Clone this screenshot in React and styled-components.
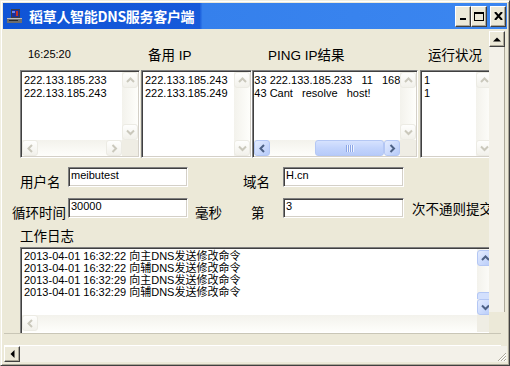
import React from "react"
import styled, { createGlobalStyle } from "styled-components"

const GlobalStyle = createGlobalStyle`
  html, body {
    margin: 0;
    padding: 0;
    background: #ECE9D8;
  }
  body {
    font-family: "Liberation Sans", Arial, sans-serif;
  }
`

const CJK = `"Liberation Sans", "Noto Sans CJK SC", sans-serif`
const COLS = "121px 111px 168px 74px"

// ---------- window frame ----------

const Window = styled.div`
  width: 510px;
  height: 366px;
  box-sizing: border-box;
  display: flex;
  flex-direction: column;
  background: #ECE9D8;
  border-top: 1px solid #F1EFE2;
  border-left: 1px solid #F1EFE2;
  border-right: 1px solid #404040;
  border-bottom: 1px solid #404040;
  box-shadow: inset 1px 1px #fff, inset -1px -1px #ACA899;
  padding: 2px 2px 2px 2px;
  overflow: hidden;
`

const TitleBar = styled.div`
  height: 26px;
  flex: none;
  display: flex;
  align-items: center;
  padding: 0 1px 0 3px;
  background: linear-gradient(90deg, #0F54D6 0%, #1659DA 39%, #3580EC 39.6%, #3B86F0 100%);
`

const Title = styled.div`
  margin-left: 6px;
  color: #fff;
  font-family: "Noto Sans CJK SC", sans-serif;
  font-weight: 700;
  font-size: 14px;
  letter-spacing: -0.3px;
  flex: 1;
`

const Controls = styled.div`
  display: flex;
  align-items: center;
`

const CaptionButton = styled.div`
  width: 16px;
  height: 21px;
  box-sizing: border-box;
  margin-left: ${(p) => p.$gap || 0}px;
  background: #ECE9D8;
  border-top: 1px solid #fff;
  border-left: 1px solid #fff;
  border-right: 1px solid #404040;
  border-bottom: 1px solid #404040;
  box-shadow: inset -1px -1px #ACA899;
  display: flex;
  align-items: center;
  justify-content: center;
`

const AppIcon = () => (
  <svg width="17" height="16" viewBox="0 0 17 16">
    <rect x="1" y="10" width="15" height="5" fill="#6E6E6E" />
    <rect x="1" y="10" width="15" height="1" fill="#BDBDBD" />
    <rect x="3" y="12" width="9" height="1" fill="#2A2A2A" />
    <rect x="5" y="1" width="9" height="9" fill="#3C3C44" />
    <rect x="6" y="2" width="7" height="7" fill="#1B2E9A" />
    <rect x="10" y="3" width="2" height="5" fill="#C03028" />
    <rect x="6" y="3" width="3" height="2" fill="#6F86E8" />
  </svg>
)

// ---------- client area ----------

const Client = styled.div`
  flex: 1;
  display: flex;
  flex-direction: column;
  margin: 0 0 0 1px;
  min-height: 0;
`

const Body = styled.div`
  height: 304px;
  flex: none;
  display: flex;
`

const FormView = styled.div`
  width: 485px;
  flex: none;
  overflow: hidden;
  display: flex;
  flex-direction: column;
`

const ClassicScroll = styled.div`
  width: 16px;
  height: 281px;
  margin-top: 2px;
  box-sizing: border-box;
  display: flex;
  flex-direction: column;
  background: #F3F1E9;
  border-right: 1px solid #ACA899;
`

const ClassicArrow = styled.div`
  width: 16px;
  height: 16px;
  flex: none;
  box-sizing: border-box;
  background: #ECE9D8;
  border-top: 1px solid #fff;
  border-left: 1px solid #fff;
  border-right: 1px solid #404040;
  border-bottom: 1px solid #404040;
  box-shadow: inset -1px -1px #ACA899;
  display: flex;
  align-items: center;
  justify-content: center;
`

const Strip = styled.div`
  height: 11px;
  flex: none;
  border-top: 1px solid #C9C6B6;
  border-bottom: 1px solid #fff;
  margin-right: 6px;
`

const HScroll = styled.div`
  height: 16px;
  flex: none;
  display: flex;
  background: #F3F1E9;
`

const Grip = styled.div`
  margin-left: auto;
  width: 14px;
  height: 16px;
  display: flex;
  align-items: flex-end;
  justify-content: flex-end;
`

// ---------- top section ----------

const HeadRow = styled.div`
  display: grid;
  grid-template-columns: ${COLS};
  height: 16px;
  margin: 15px 0 0 16px;
  align-items: center;
`

const HeadLabel = styled.div`
  padding-left: ${(p) => p.$indent}px;
  font-family: ${CJK};
  font-size: ${(p) => (p.$small ? 11 : 13.5)}px;
  color: #000;
  white-space: nowrap;
`

const BoxRow = styled.div`
  display: grid;
  grid-template-columns: ${COLS};
  margin: 10px 0 0 16px;
  height: 88px;
`

const Sunken = styled.div`
  width: ${(p) => p.$w}px;
  height: ${(p) => p.$h}px;
  box-sizing: border-box;
  background: #fff;
  border-top: 1px solid #808080;
  border-left: 1px solid #808080;
  border-right: 1px solid #fff;
  border-bottom: 1px solid #fff;
  box-shadow: inset 1px 1px #404040, inset -1px -1px #D4D0C8;
  padding: 1px;
  display: grid;
  grid-template-columns: 1fr 16px;
  grid-template-rows: ${(p) => (p.$hbar ? "1fr 16px" : "1fr")};
  overflow: hidden;
`

const Lines = styled.div`
  overflow: hidden;
  padding: ${(p) => p.$top || 2}px 0 0 ${(p) => p.$left || 2}px;
  font-size: 11px;
  line-height: ${(p) => p.$lh || 13}px;
  color: #000;
  white-space: pre;
  font-family: ${CJK};
`

const Line = styled.div`
  margin-left: ${(p) => p.$shift || 0}px;
`

const XpVTrack = styled.div`
  display: flex;
  flex-direction: column;
  justify-content: space-between;
  background: linear-gradient(90deg, #F3F2EC 0%, #FEFEFB 100%);
`

const XpHTrack = styled.div`
  display: flex;
  align-items: stretch;
  background: linear-gradient(180deg, #F3F2EC 0%, #FEFEFB 100%);
`

const Corner = styled.div`
  background: #EFEDE4;
`

const XpButton = styled.div`
  width: 16px;
  height: 16px;
  flex: none;
  box-sizing: border-box;
  border-radius: 3px;
  display: flex;
  align-items: center;
  justify-content: center;
  margin-left: ${(p) => (p.$end ? "auto" : "0")};
  border: 1px solid ${(p) => (p.$active ? "#B4C7F4" : "#ECEBE4")};
  background: ${(p) =>
    p.$active
      ? "linear-gradient(135deg, #E4ECFE 0%, #CBDAFC 55%, #B6CAF8 100%)"
      : "linear-gradient(180deg, #FEFEFD 0%, #F2F1EB 100%)"};
`

const XpThumb = styled.div`
  width: ${(p) => p.$w}px;
  margin-left: ${(p) => p.$at}px;
  box-sizing: border-box;
  border-radius: 3px;
  border: 1px solid #B4C7F4;
  background: linear-gradient(180deg, #D6E2FE 0%, #C3D4FC 50%, #B7CBF9 100%);
  display: flex;
  align-items: center;
  justify-content: center;
`

const GripLine = styled.span`
  width: 1px;
  height: 7px;
  background: #8CA6E6;
  box-shadow: 1px 0 #EEF3FF;
  margin-right: 1px;
`

const Spacer = styled.div`
  flex: 1;
`

const Chevron = ({ dir, active }) => {
  const pts = {
    up: "1,5 4.5,1.5 8,5",
    down: "1,1.5 4.5,5 8,1.5",
    left: "5,1 1.5,4.5 5,8",
    right: "1.5,1 5,4.5 1.5,8",
  }[dir]
  const vert = dir === "up" || dir === "down"
  return (
    <svg width={vert ? 9 : 7} height={vert ? 7 : 9} viewBox={vert ? "0 0 9 7" : "0 0 7 9"}>
      <polyline
        points={pts}
        fill="none"
        stroke={active ? "#4D6185" : "#CAC8BC"}
        strokeWidth="2"
      />
    </svg>
  )
}

const Tri = ({ dir }) => {
  const pts = { up: "0,4 4,0 8,4", left: "4,0 0,4 4,8" }[dir]
  const vert = dir === "up"
  return (
    <svg width={vert ? 8 : 5} height={vert ? 5 : 8} viewBox={vert ? "0 0 8 4" : "0 0 4 8"}>
      <polygon points={pts} fill="#000" />
    </svg>
  )
}

const VBar = ({ active }) => (
  <XpVTrack>
    <XpButton $active={active}>
      <Chevron dir="up" active={active} />
    </XpButton>
    <XpButton $active={active}>
      <Chevron dir="down" active={active} />
    </XpButton>
  </XpVTrack>
)

const ListBox = ({ w, lines, hbar, shift }) => (
  <Sunken $w={w} $h={88} $hbar={!!hbar}>
    <Lines>
      {lines.map((l, i) => (
        <Line key={i} $shift={shift}>
          {l}
        </Line>
      ))}
    </Lines>
    <VBar />
    {hbar === "faded" && (
      <>
        <XpHTrack>
          <XpButton>
            <Chevron dir="left" />
          </XpButton>
          <Spacer />
          <XpButton>
            <Chevron dir="right" />
          </XpButton>
        </XpHTrack>
        <Corner />
      </>
    )}
    {hbar === "active" && (
      <>
        <XpHTrack>
          <XpButton $active>
            <Chevron dir="left" active />
          </XpButton>
          <XpThumb $w={69} $at={45}>
            <GripLine />
            <GripLine />
            <GripLine />
            <GripLine />
          </XpThumb>
          <XpButton $active $end>
            <Chevron dir="right" active />
          </XpButton>
        </XpHTrack>
        <Corner />
      </>
    )}
  </Sunken>
)

// ---------- fields ----------

const FieldGrid = styled.div`
  display: grid;
  grid-template-columns: 56px 120px 55px 40px 121px auto;
  grid-auto-rows: 20px;
  row-gap: 11px;
  margin: 9px 0 0 8px;
`

const FieldLabel = styled.div`
  padding-left: ${(p) => p.$pad || 0}px;
  padding-top: ${(p) => p.$drop || 0}px;
  font-family: "Noto Sans CJK SC", sans-serif;
  font-size: 13.5px;
  line-height: 20px;
  white-space: nowrap;
  color: #000;
`

const TextBox = styled.input`
  width: 100%;
  height: 20px;
  box-sizing: border-box;
  margin: 0;
  padding: 0 0 4px 2px;
  background: #fff;
  border-top: 1px solid #808080;
  border-left: 1px solid #808080;
  border-right: 1px solid #fff;
  border-bottom: 1px solid #fff;
  box-shadow: inset 1px 1px #404040, inset -1px -1px #D4D0C8;
  font-family: "Liberation Sans", Arial, sans-serif;
  font-size: 11px;
  color: #000;
  outline: none;
`

// ---------- log ----------

const LogTitle = styled.div`
  margin: 9px 0 0 16px;
  height: 16px;
  line-height: 16px;
  font-family: "Noto Sans CJK SC", sans-serif;
  font-size: 13.5px;
  color: #000;
`

const LogBox = styled.div`
  margin: 4px 0 0 16px;
  width: 474px;
  height: 86px;
  box-sizing: border-box;
  background: #fff;
  border-top: 1px solid #808080;
  border-left: 1px solid #808080;
  border-right: 1px solid #fff;
  box-shadow: inset 1px 1px #404040;
  padding: 1px 0 0 1px;
  display: grid;
  grid-template-columns: 1fr 16px;
  grid-template-rows: 66px 17px;
`

const LogVBar = styled.div`
  display: flex;
  flex-direction: column;
  background: linear-gradient(90deg, #F3F2EC 0%, #FEFEFB 100%);
  padding-top: 1px;
`

const LogThumb = styled.div`
  margin-top: auto;
  height: 6px;
  border-radius: 3px 3px 0 0;
  border: 1px solid #B4C7F4;
  border-bottom: none;
  background: #D3E0FD;
`

const logLines = [
  "2013-04-01 16:32:22 向主DNS发送修改命令",
  "2013-04-01 16:32:22 向辅DNS发送修改命令",
  "2013-04-01 16:32:29 向主DNS发送修改命令",
  "2013-04-01 16:32:29 向辅DNS发送修改命令",
]

const App = () => {
  return (
    <>
      <GlobalStyle />
      <Window>
        <TitleBar>
          <AppIcon />
          <Title>稻草人智能DNS服务客户端</Title>
          <Controls>
            <CaptionButton>
              <svg width="6" height="10" viewBox="0 0 6 10">
                <rect x="0" y="7" width="6" height="2" fill="#000" />
              </svg>
            </CaptionButton>
            <CaptionButton>
              <svg width="10" height="10" viewBox="0 0 10 10">
                <rect x="0.5" y="1.5" width="9" height="8" fill="none" stroke="#000" />
                <rect x="0" y="1" width="10" height="2" fill="#000" />
              </svg>
            </CaptionButton>
            <CaptionButton $gap={3}>
              <svg width="9" height="8" viewBox="0 0 9 8">
                <path d="M1 0 L8 8 M8 0 L1 8" stroke="#000" strokeWidth="2" />
              </svg>
            </CaptionButton>
          </Controls>
        </TitleBar>

        <Client>
          <Body>
            <FormView>
              <HeadRow>
                <HeadLabel $indent={8} $small>
                  16:25:20
                </HeadLabel>
                <HeadLabel $indent={7}>备用 IP</HeadLabel>
                <HeadLabel $indent={16}>PING IP结果</HeadLabel>
                <HeadLabel $indent={8}>运行状况</HeadLabel>
              </HeadRow>

              <BoxRow>
                <ListBox w={120} hbar="faded" lines={["222.133.185.233", "222.133.185.243"]} />
                <ListBox w={111} lines={["222.133.185.243", "222.133.185.249"]} />
                <ListBox
                  w={166}
                  hbar="active"
                  shift={-72}
                  lines={[
                    "222.133.185.233 222.133.185.233   11   168",
                    "222.133.185.243 Cant   resolve   host!",
                  ]}
                />
                <ListBox w={74} lines={["1", "1"]} />
              </BoxRow>

              <FieldGrid>
                <FieldLabel $pad={8} $drop={4}>用户名</FieldLabel>
                <TextBox readOnly defaultValue="meibutest" />
                <div />
                <FieldLabel $drop={4}>域名</FieldLabel>
                <TextBox readOnly defaultValue="H.cn" />
                <div />

                <FieldLabel $drop={4}>循环时间</FieldLabel>
                <TextBox readOnly defaultValue="30000" />
                <FieldLabel $pad={7} $drop={4}>毫秒</FieldLabel>
                <FieldLabel $pad={8} $drop={4}>第</FieldLabel>
                <TextBox readOnly defaultValue="3" />
                <FieldLabel $pad={8} $drop={-2}>次不通则提交</FieldLabel>
              </FieldGrid>

              <LogTitle>工作日志</LogTitle>
              <LogBox>
                <Lines $top={1} $left={2} $lh={12}>
                  {logLines.map((l, i) => (
                    <Line key={i}>{l}</Line>
                  ))}
                </Lines>
                <LogVBar>
                  <XpButton $active>
                    <Chevron dir="up" active />
                  </XpButton>
                  <LogThumb />
                  <XpButton $active>
                    <Chevron dir="down" active />
                  </XpButton>
                </LogVBar>
                <XpHTrack>
                  <XpButton>
                    <Chevron dir="left" />
                  </XpButton>
                </XpHTrack>
                <Corner />
              </LogBox>
            </FormView>

            <ClassicScroll>
              <ClassicArrow>
                <Tri dir="up" />
              </ClassicArrow>
            </ClassicScroll>
          </Body>

          <Strip />

          <HScroll>
            <ClassicArrow>
              <Tri dir="left" />
            </ClassicArrow>
            <Grip>
              <svg width="12" height="12" viewBox="0 0 12 12">
                <path d="M11 3 L3 11 M11 6 L6 11 M11 9 L9 11" stroke="#ACA899" strokeWidth="1" />
                <path d="M11 4 L4 11 M11 7 L7 11 M11 10 L10 11" stroke="#fff" strokeWidth="1" />
              </svg>
            </Grip>
          </HScroll>
        </Client>
      </Window>
    </>
  )
}

export default App
